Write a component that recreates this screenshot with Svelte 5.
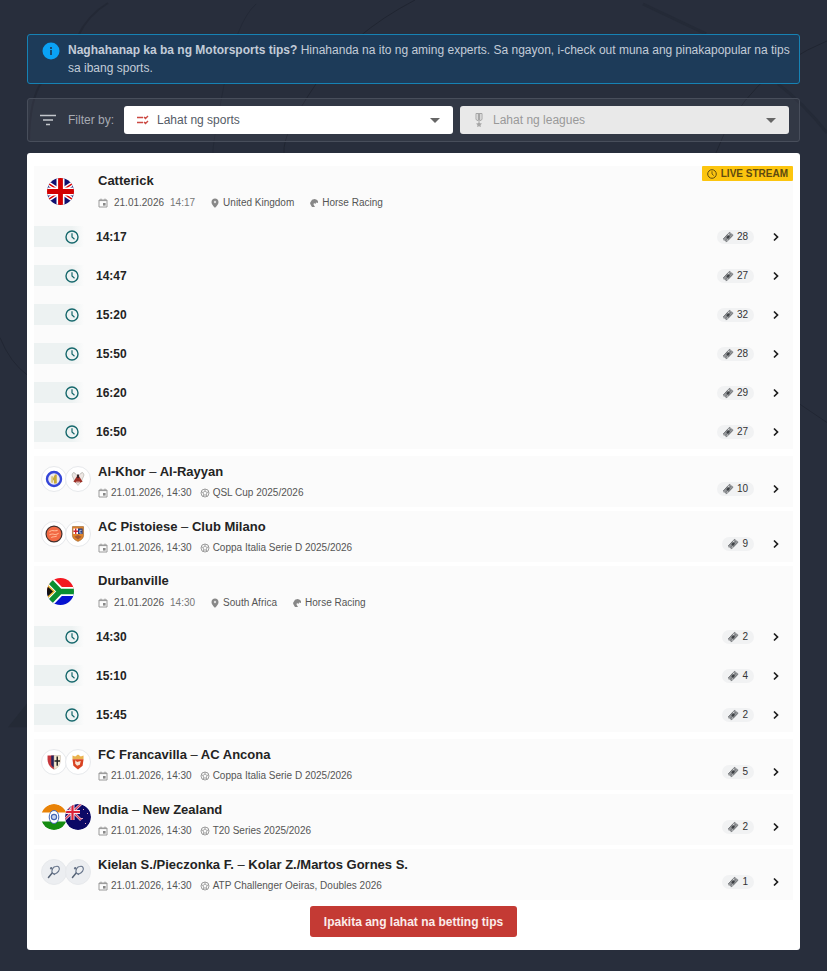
<script lang="ts">
	interface Race {
		kind: 'race';
		name: string;
		flag: string;
		time: string;
		country: string;
		live: boolean;
		starts: { time: string; tips: number }[];
	}
	interface Match {
		kind: 'match';
		home: string;
		away: string;
		logos: string[];
		league: string;
		tips: number;
	}

	const date = '21.01.2026';

	const events: (Race | Match)[] = [
		{
			kind: 'race',
			name: 'Catterick',
			flag: 'uk',
			time: '14:17',
			country: 'United Kingdom',
			live: true,
			starts: [
				{ time: '14:17', tips: 28 },
				{ time: '14:47', tips: 27 },
				{ time: '15:20', tips: 32 },
				{ time: '15:50', tips: 28 },
				{ time: '16:20', tips: 29 },
				{ time: '16:50', tips: 27 }
			]
		},
		{ kind: 'match', home: 'Al-Khor', away: 'Al-Rayyan', logos: ['khor', 'rayyan'], league: 'QSL Cup 2025/2026', tips: 10 },
		{ kind: 'match', home: 'AC Pistoiese', away: 'Club Milano', logos: ['pistoiese', 'milano'], league: 'Coppa Italia Serie D 2025/2026', tips: 9 },
		{
			kind: 'race',
			name: 'Durbanville',
			flag: 'za',
			time: '14:30',
			country: 'South Africa',
			live: false,
			starts: [
				{ time: '14:30', tips: 2 },
				{ time: '15:10', tips: 4 },
				{ time: '15:45', tips: 2 }
			]
		},
		{ kind: 'match', home: 'FC Francavilla', away: 'AC Ancona', logos: ['francavilla', 'ancona'], league: 'Coppa Italia Serie D 2025/2026', tips: 5 },
		{ kind: 'match', home: 'India', away: 'New Zealand', logos: ['india', 'nz'], league: 'T20 Series 2025/2026', tips: 2 },
		{ kind: 'match', home: 'Kielan S./Pieczonka F.', away: 'Kolar Z./Martos Gornes S.', logos: ['tennis', 'tennis'], league: 'ATP Challenger Oeiras, Doubles 2026', tips: 1 }
	];

	let sport = $state('all');
	let league = $state('all');
</script>

{#snippet calendar()}
	<svg class="small" viewBox="0 0 10 10" aria-hidden="true">
		<path d="M1 2h8v7H1zM1 2.6h8M3 .6V2M7 .6V2" fill="none" stroke="#9a9a9a" />
		<path d="M5 5h2.6v2.6H5z" fill="#888" />
	</svg>
{/snippet}

{#snippet clock()}
	<svg class="clock" viewBox="0 0 14 14" fill="none" stroke="currentColor" aria-hidden="true">
		<circle cx="7" cy="7" r="6" stroke-width="1.4" />
		<path d="M7 3.2V7l2.5 2.2" stroke-width="1.2" />
	</svg>
{/snippet}

{#snippet tipCount(tips: number)}
	<span class="tips">
		<svg viewBox="0 0 12 12" aria-hidden="true">
			<path d="M1 8 5.2 3.2 6.8 4 7 1.600 8 .8l1 1.400L11.300 3.500 10.800 4.800 6.600 9.200 5.300 8.600 4.800 11 3.800 11.300 3.200 9.600 1.500 9.400z" fill="#97999c" />
			<path d="M1.200 8 7.600 1.200M4.400 11 11 4.200M3 9.800l6.400-7" stroke="#66696d" stroke-width=".8" />
			<path d="m4.200 6.200 2-2 1.800 1.600-2 2.200z" fill="#3d4044" />
		</svg>
		{tips}
	</span>
	<svg class="chevron" viewBox="0 0 12 12" aria-hidden="true">
		<path d="m4 2.500 3.500 3.500L4 9.500" fill="none" stroke="#1c1c1c" stroke-width="1.700" />
	</svg>
{/snippet}

{#snippet flag(name: string)}
	<svg class="flag" viewBox="0 0 27 27" aria-hidden="true">
		<defs>
			<clipPath id="round-{name}"><circle cx="13.5" cy="13.5" r="13.5" /></clipPath>
		</defs>
		<g clip-path="url(#round-{name})">
			{#if name === 'uk'}
				<path fill="#10106f" d="M0 0h27v27H0z" />
				<path d="M-4 2l35 23M31 2-4 25" stroke="#fff" stroke-width="4.500" />
				<path d="M-4 2l35 23M31 2-4 25" stroke="#d00" stroke-width="1.400" />
				<path d="M13.500 0v27M0 13.500h27" stroke="#fff" stroke-width="8" />
				<path d="M13.500 0v27M0 13.500h27" stroke="#d20000" stroke-width="4.800" />
			{:else if name === 'za'}
				<path fill="#f31820" d="M0 0h27v13.500H0z" />
				<path fill="#0612d0" d="M0 13.500h27V27H0z" />
				<path d="M-2-2 13 13.500-2 29M12 13.500h16" fill="none" stroke="#fff" stroke-width="9" />
				<path d="M-2-2 13 13.500-2 29M12 13.500h16" fill="none" stroke="#0a8f30" stroke-width="5.400" />
				<path d="M-1 6 7 13.500-1 21z" fill="#111" stroke="#e6b52d" stroke-width="1.400" />
			{/if}
		</g>
	</svg>
{/snippet}

{#snippet logo(name: string)}
	<svg class="logo" class:plain={name === 'tennis'} class:full={name === 'india' || name === 'nz'} viewBox="0 0 26 26" aria-hidden="true">
		{#if name === 'khor'}
			<circle cx="13" cy="13" r="7.600" fill="#edeaf1" stroke="#3546d8" stroke-width="2.600" />
			<path d="M14 8h2v10h-3v-4l-3 2z" fill="#c8aa36" />
			<path d="M10 10h2v7h-2z" fill="#dac77b" />
		{:else if name === 'rayyan'}
			<path d="M8 6c3 0 3 4 5 4s2-4 5-4c3 3 0 5-1 9l-4 5-4-5c-1-4-4-6-1-9z" fill="#eee7e4" stroke="#a9aaa2" stroke-width=".7" />
			<path d="m13 8 5 8-3 1-1-2-1 3-1-3-1 2-3-1z" fill="#9d3027" />
			<path d="M12 8h2v4h-2z" fill="#34252a" />
		{:else if name === 'pistoiese'}
			<circle cx="13" cy="13" r="8.600" fill="#f26943" stroke="#44302d" stroke-width="1.300" />
			<path d="M8 11c3-4 4 0 9-2M8 14c5-3 5 2 10-2M10 17c2-2 4 0 6-2" fill="none" stroke="#ffb38e" stroke-width="1.200" />
		{:else if name === 'milano'}
			<path d="M7 5h12v10c0 4-6 6-6 6s-6-2-6-6z" fill="#df842b" stroke="#9a622f" stroke-width=".7" />
			<path fill="#fff" d="M8 7h5v6H8z" />
			<path d="M10.500 7v6M8 10h5" stroke="#ce2431" stroke-width="1.500" />
			<path fill="#263d84" d="M13 7h5v6h-5z" />
			<path d="M17 9h-2v3h2" fill="none" stroke="#eee" stroke-width=".8" />
			<path d="m9 16 4-2 4 2-4 3z" fill="#a65730" />
		{:else if name === 'francavilla'}
			<path d="M6 6h7v15c-5-2-7-7-7-11z" fill="#c6373c" />
			<path d="M10 6h3v13c-2-1-3-2-3-4z" fill="#27225a" />
			<path d="M13 6h7v4c0 6-3 10-7 11z" fill="#f6ead0" stroke="#b6a99b" stroke-width=".5" />
			<path d="M16.500 7v10M13.500 12h6" stroke="#222" stroke-width="1.600" />
		{:else if name === 'ancona'}
			<path d="m7 6 3 1 3-2 3 2 3-1v4H7z" fill="#eab34f" />
			<path d="M7 10h12l-1 7-5 4-5-4z" fill="#d94322" />
			<path d="m10 11 2 2 4-1-1 4-3 1-2-2z" fill="#f8e5d4" />
		{:else if name === 'india'}
			<clipPath id="round-india"><circle cx="13" cy="13" r="13" /></clipPath>
			<g clip-path="url(#round-india)">
				<path fill="#fff" d="M0 0h26v26H0z" />
				<path fill="#e98307" d="M0 0h26v8.500H0z" />
				<path fill="#168c12" d="M0 17.500h26V26H0z" />
			</g>
			<ellipse cx="13" cy="13" rx="4.800" ry="6.500" fill="#fff" stroke="#4668b4" stroke-width="1" />
			<circle cx="13" cy="13" r="2.600" fill="#c6d3f0" stroke="#4367b5" stroke-width="1.200" />
		{:else if name === 'nz'}
			<clipPath id="round-nz"><circle cx="13" cy="13" r="13" /></clipPath>
			<g clip-path="url(#round-nz)">
				<path fill="#0c0966" d="M0 0h26v26H0z" />
				<path d="M0 0 16 16M16 0-2 17" stroke="#e7c9dd" stroke-width="2.600" />
				<path d="M0 0 16 16M16 0-2 17" stroke="#d83b58" stroke-width="1.200" />
				<path d="M7.500 0v16M0 8h15" stroke="#f2e5ee" stroke-width="4" />
				<path d="M7.500 0v16M0 8h15" stroke="#dc2037" stroke-width="2.200" />
			</g>
			<path d="M18 5h1v1h-1zM22 9h1v1h-1zM16 14h2v1h-2zM20 19h1v1h-1z" fill="#e6a7bd" />
		{:else}
			<path d="m7 19 4-5" stroke="#586577" stroke-width="1.600" stroke-linecap="round" />
			<path d="M11 14c-1-3 1-7 4-7 3-1 5 2 3 5s-5 4-7 2l3 2" fill="none" stroke="#66748a" stroke-width="1.200" />
			<circle cx="10" cy="9" r="1.300" fill="#667286" />
		{/if}
	</svg>
{/snippet}

<div class="page">
	<!-- faint curved lines behind the content -->
	<svg class="backdrop" viewBox="0 0 827 971" preserveAspectRatio="none" fill="none" stroke="#202531" aria-hidden="true">
		<path d="M108 3Q88 15 78 36M42 82Q30 98 29 140" stroke-width="2" opacity=".6" />
		<path d="M256 4Q236 22 224 85T213 153" opacity=".55" />
		<path d="M415 0Q350 34 316 84T284 153" />
		<path d="M827 41Q745 75 716 153" />
		<path d="M643 4 706 34M778 84Q804 104 827 133" stroke-width="3" opacity=".5" />
		<path d="M0 338Q10 363 28 376M827 423 799 404" opacity=".8" />
		<path d="M8 728 28 703v25z" fill="#242a36" stroke="none" />
	</svg>

	<div class="alert">
		<svg class="info" viewBox="0 0 18 18" aria-hidden="true">
			<circle cx="9" cy="9" r="8.500" fill="#0aa2f5" />
			<path d="M9 5v2M9 8v5" stroke="#1d3b59" stroke-width="1.700" />
		</svg>
		<p>
			<strong>Naghahanap ka ba ng Motorsports tips?</strong> Hinahanda na ito ng aming experts. Sa ngayon, i-check out muna ang
			pinakapopular na tips sa ibang sports.
		</p>
	</div>

	<div class="filter">
		<svg class="filter-icon" viewBox="0 0 16 12" stroke="#c3c6cc" stroke-width="1.500" aria-hidden="true">
			<path d="M0 1.500h16M3 6h10M6 10.500h4" />
		</svg>
		<span class="filter-label">Filter by:</span>
		<div class="select">
			<svg viewBox="0 0 14 12" fill="none" stroke="#cc4a43" stroke-width="1.400" aria-hidden="true">
				<path d="M1 3.500h6M1 8.500h6M8 3l1.500 1.500L12 2M8 8l1.500 1.500L12 7" />
			</svg>
			<select aria-label="Filter by sport" bind:value={sport}>
				<option value="all">Lahat ng sports</option>
			</select>
		</div>
		<div class="select disabled">
			<svg viewBox="0 0 14 14" fill="none" stroke="#a6a6a6" aria-hidden="true">
				<path d="M4 .5v6l2.500 1.500h1L10 6.500v-6z" />
				<path d="M7 .5v7" stroke-width="2.500" />
				<path d="m7 8.500 1 1.800 2 .2-1.500 1.400.4 2.100-1.900-.8-1.900.8.4-2.100L4 10.500l2-.2z" fill="#a6a6a6" stroke="none" />
			</svg>
			<select aria-label="Filter by league" bind:value={league} disabled>
				<option value="all">Lahat ng leagues</option>
			</select>
		</div>
	</div>

	<main class="panel">
		<div class="events">
			{#each events as event}
				{#if event.kind === 'race'}
					<section class="card race">
						<header class="head">
							<div class="icons">{@render flag(event.flag)}</div>
							<div class="text">
								<h2>{event.name}</h2>
								<div class="meta">
									<span class="when">{@render calendar()}{date} <span class="light">{event.time}</span></span>
									<span>
										<svg class="small" viewBox="0 0 10 10" aria-hidden="true">
											<path d="M5 .5a3.500 3.500 0 0 0-3.500 3.700C1.500 6.600 5 9.800 5 9.800s3.500-3.200 3.500-5.600A3.500 3.500 0 0 0 5 .5z" fill="#888" />
											<circle cx="5" cy="4" r="1.200" fill="#ddd" />
										</svg>
										{event.country}
									</span>
									<span>
										<svg class="small" viewBox="0 0 10 10" aria-hidden="true">
											<path d="M1 5 3 1.800 5.500 1c2.500.2 4 2 3.500 4L7 4.500 6.500 6 5 5 4.500 6.500 6 9H3L1.500 6.500z" fill="#888" />
										</svg>
										Horse Racing
									</span>
								</div>
							</div>
							{#if event.live}
								<span class="live">{@render clock()}LIVE STREAM</span>
							{/if}
						</header>
						<div class="starts">
							{#each event.starts as start}
								<a class="start" href="#tips">
									<span class="strip">{@render clock()}</span>
									<b>{start.time}</b>
									{@render tipCount(start.tips)}
								</a>
							{/each}
						</div>
					</section>
				{:else}
					<a class="card match" href="#tips">
						<div class="icons pair">
							{#each event.logos as name}
								{@render logo(name)}
							{/each}
						</div>
						<div class="text">
							<h2>{event.home} <span>–</span> {event.away}</h2>
							<div class="meta">
								<span>{@render calendar()}{date}, 14:30</span>
								<span>
									<svg class="small" viewBox="0 0 10 10" fill="none" stroke="#939393" aria-hidden="true">
										<circle cx="5" cy="5" r="4" stroke-width=".9" />
										<path d="m5 3 2 1.500L6.200 7H3.800L3 4.500zM5 3V1M7 4.500l2-.8M6.200 7l1 1.600M3.800 7l-1 1.600M3 4.500l-2-.8" stroke-width=".8" />
									</svg>
									{event.league}
								</span>
							</div>
						</div>
						<div class="side">{@render tipCount(event.tips)}</div>
					</a>
				{/if}
			{/each}
		</div>
		<button class="all">Ipakita ang lahat na betting tips</button>
	</main>
</div>

<style>
	:global(body) {
		background: #282e3c;
		font-family: 'Liberation Sans', Arial, sans-serif;
	}
	.page {
		position: relative;
		padding: 34px 27px 20px;
	}
	.backdrop {
		position: absolute;
		inset: 0;
		width: 100%;
		height: 100%;
		z-index: -1;
	}
	svg {
		flex: none;
	}
	a {
		color: inherit;
		text-decoration: none;
	}
	.alert {
		display: flex;
		gap: 8px;
		padding: 6px 4px 6px 14px;
		border: 1px solid #1682b4;
		border-radius: 3px;
		background: #1d3b59;
		color: #c3ccd8;
		font-size: 12px;
		line-height: 18px;
	}
	.alert p {
		margin: 0;
	}
	.info {
		width: 18px;
		height: 18px;
		margin-top: 1px;
	}
	.filter {
		display: flex;
		align-items: center;
		gap: 7px;
		margin: 14px 0 11px;
		padding: 7px 10px 7px 12px;
		border: 1px solid #484e5b;
		border-radius: 3px;
		background: rgba(255, 255, 255, 0.05);
	}
	.filter-icon {
		width: 16px;
		height: 12px;
		margin-right: 5px;
	}
	.filter-label {
		margin-right: 3px;
		color: #a6aab3;
		font-size: 12px;
	}
	.select {
		position: relative;
		flex: 1;
	}
	.select svg {
		position: absolute;
		left: 12px;
		top: 7px;
		width: 14px;
		height: 14px;
	}
	.select::after {
		content: '';
		position: absolute;
		right: 13px;
		top: 12px;
		border: 5px solid transparent;
		border-top-color: #666;
		border-bottom: 0;
		pointer-events: none;
	}
	select {
		display: block;
		appearance: none;
		width: 100%;
		height: 28px;
		padding: 0 32px 0 33px;
		border: 0;
		border-radius: 3px;
		background: #fff;
		color: #555b66;
		font: inherit;
		font-size: 12px;
	}
	.disabled select {
		background: #e9e9e9;
		color: #999;
		opacity: 1;
	}
	.panel {
		padding: 13px 7px;
		border-radius: 3px;
		background: #fff;
	}
	.events {
		display: flex;
		flex-direction: column;
		gap: 4px;
	}
	.card {
		background: #fbfbfb;
	}
	.race {
		margin-bottom: 3px;
		padding-bottom: 7px;
	}
	.head,
	.match {
		display: flex;
		align-items: flex-start;
		padding-left: 7px;
	}
	.head {
		height: 60px;
	}
	.icons {
		display: flex;
		justify-content: center;
		width: 39px;
		margin-right: 18px;
		padding-top: 12px;
	}
	.icons.pair {
		justify-content: flex-start;
		width: 50px;
		margin-right: 7px;
		padding-top: 10px;
	}
	.flag {
		width: 27px;
		height: 27px;
	}
	.logo {
		box-sizing: border-box;
		width: 26px;
		height: 26px;
		border: 1px solid #e7e9ec;
		border-radius: 50%;
		background: #fff;
	}
	.logo + .logo {
		margin-left: -2px;
	}
	.logo.plain {
		background: #eceef1;
	}
	.logo.full {
		border: 0;
	}
	.text {
		flex: 1;
		padding: 6px 0;
	}
	.match .text {
		padding: 7px 0;
	}
	h2 {
		margin: 0 0 6px;
		color: #232323;
		font-size: 13px;
		line-height: 18px;
	}
	.match h2 {
		margin-bottom: 5px;
	}
	h2 span {
		font-weight: normal;
	}
	.meta {
		display: flex;
		gap: 8px;
		color: #555;
		font-size: 10px;
		line-height: 14px;
	}
	.meta > span {
		display: flex;
		align-items: center;
		gap: 3px;
	}
	.race .meta {
		gap: 15px;
	}
	.race .meta .when {
		gap: 6px;
	}
	.light {
		color: #777;
	}
	.small {
		width: 10px;
		height: 10px;
	}
	.live {
		display: flex;
		align-items: center;
		gap: 4px;
		padding: 0 5px;
		border-radius: 1px;
		background: #fcc50f;
		color: #5e4a10;
		font-size: 10px;
		font-weight: bold;
		line-height: 15px;
	}
	.live .clock {
		width: 10px;
		height: 10px;
	}
	.starts {
		display: grid;
		gap: 18px;
	}
	.start {
		display: flex;
		align-items: center;
		height: 21px;
		padding-right: 11px;
	}
	.start b {
		flex: 1;
		color: #232323;
		font-size: 12px;
	}
	.strip {
		display: flex;
		align-items: center;
		justify-content: flex-end;
		box-sizing: border-box;
		width: 50px;
		height: 21px;
		margin-right: 12px;
		padding-right: 5px;
		background: linear-gradient(90deg, #edf2f2 75%, #fbfbfb);
		color: #16686c;
	}
	.clock {
		width: 14px;
		height: 14px;
	}
	.side {
		display: flex;
		align-items: center;
		padding: 26px 11px 0 0;
	}
	.tips {
		display: flex;
		align-items: center;
		gap: 3px;
		padding: 0 6px 0 5px;
		border-radius: 7px;
		background: #f1f2f3;
		color: #333;
		font-size: 10px;
		line-height: 14px;
	}
	.tips svg {
		width: 12px;
		height: 12px;
	}
	.chevron {
		width: 12px;
		height: 12px;
		margin-left: 16px;
	}
	.all {
		display: block;
		margin: 6px auto 0;
		padding: 0 14px;
		height: 31px;
		border: 0;
		border-radius: 3px;
		background: #c43a34;
		color: #fbecea;
		font: inherit;
		font-size: 12px;
		font-weight: bold;
	}
</style>
